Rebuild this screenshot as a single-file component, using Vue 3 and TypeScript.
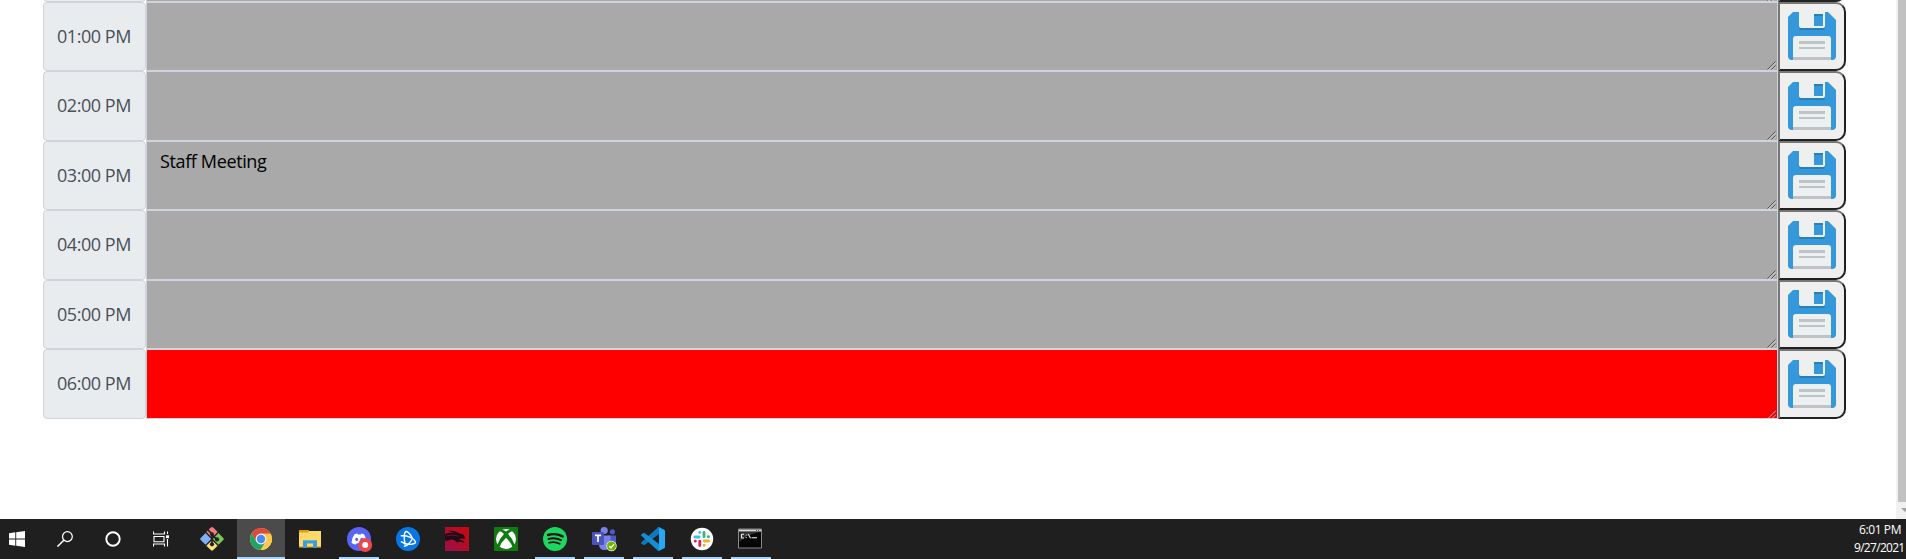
<script setup lang="ts">
interface Slot {
  label: string
  text: string
  current?: boolean
}

interface Task {
  name: string
  open?: boolean
  active?: boolean
}

const slots: Slot[] = [
  { label: '', text: '' },
  { label: '01:00 PM', text: '' },
  { label: '02:00 PM', text: '' },
  { label: '03:00 PM', text: 'Staff Meeting' },
  { label: '04:00 PM', text: '' },
  { label: '05:00 PM', text: '' },
  { label: '06:00 PM', text: '', current: true },
]

const tasks: Task[] = [
  { name: 'git' },
  { name: 'chrome', active: true, open: true },
  { name: 'explorer' },
  { name: 'discord', open: true },
  { name: 'battlenet' },
  { name: 'dragon' },
  { name: 'xbox' },
  { name: 'spotify', open: true },
  { name: 'teams', open: true },
  { name: 'vscode', open: true },
  { name: 'slack', open: true },
  { name: 'terminal', open: true },
]
</script>

<template>
  <div class="screen">
    <main class="page">
      <div class="planner">
        <div v-for="(slot, i) in slots" :key="i" class="row">
          <div class="hour">{{ slot.label }}</div>
          <div class="entry" :class="{ current: slot.current }">
            <span>{{ slot.text }}</span>
            <svg class="grip" width="9" height="9" viewBox="0 0 9 9">
              <path d="M1.5 9L9 1.5M5.5 9L9 5.5" stroke="#e4e4e4" stroke-width=".7" fill="none" />
              <path d="M.5 8.5L8.5 .5M4.5 8.5L8.5 4.5" stroke="#404040" stroke-width=".8" fill="none" />
            </svg>
          </div>
          <button class="save" type="button" aria-label="Save">
            <svg width="48" height="48" viewBox="0 0 48 48">
              <path d="M5 0H40L48 8V44Q48 48 44 48H4Q0 48 0 44V5Z" fill="#3498db" />
              <path d="M11 14H37V16Q37 18 35 18H13Q11 18 11 16Z" fill="#2980b9" />
              <path d="M11 0H37V14Q37 16 35 16H13Q11 16 11 14Z" fill="#ecf0f1" />
              <path d="M26 2H35V14H26Z" fill="#3498db" />
              <path d="M26 2H35V4H26Z" fill="#2980b9" />
              <path d="M5 48V27Q5 24 8 24H40Q43 24 43 27V48Z" fill="#ecf0f1" />
              <path d="M5 45H43V48H5ZM11 29H37V32H11ZM11 35H37V37H11Z" fill="#bdc3c7" />
            </svg>
          </button>
        </div>
      </div>
      <div class="scrollbar">
        <div class="thumb"></div>
        <svg width="10" height="17" viewBox="0 0 10 17"><path d="M5 6H13L9 10Z" fill="#a3a3a3" /></svg>
      </div>
    </main>

    <footer class="taskbar">
      <div class="system start">
        <svg width="16" height="16" viewBox="0 0 16 16" fill="#fff"><path d="M0 2.2L6.3 1.3V7.4H0ZM7.2 1.2L16 0V7.4H7.2ZM0 8.4H6.3V14.7L0 13.8ZM7.2 8.4H16V16L7.2 14.8Z" /></svg>
      </div>
      <div class="system">
        <svg width="16" height="16" viewBox="0 0 16 16" fill="none" stroke="#fff" stroke-width="1.25"><circle cx="10.4" cy="5.6" r="4.9" /><path d="M6.8 9.2L.4 15.6" stroke-width="1.5" /></svg>
      </div>
      <div class="system">
        <svg width="16" height="16" viewBox="0 0 16 16"><circle cx="8" cy="8" r="6.7" fill="none" stroke="#fff" stroke-width="1.9" /></svg>
      </div>
      <div class="system">
        <svg width="16" height="16" viewBox="0 0 16 16" fill="none" stroke="#fff" stroke-width="1.1"><path d="M.5 .5V3H11.5V.5M.5 15.5V13H11.5V15.5M1 5.5H11V10.8H1ZM14.5 .5V3M14.5 8V15.5" /><path d="M13 4.3H16V7.2H13Z" fill="#fff" stroke="none" /></svg>
      </div>

      <div class="apps">
        <div v-for="task in tasks" :key="task.name" class="app" :class="{ open: task.open, active: task.active }">
          <svg v-if="task.name === 'git'" width="24" height="24" viewBox="0 0 24 24">
            <path d="M12 0Q13 0 17.6 5.1L12 10.7L6.4 5.1Q11 0 12 0Z" fill="#f27c80" />
            <path d="M5.5 6L11.2 12L5.5 17.8L.5 12.8Q-.2 12 .5 11.2Z" fill="#7fb0f8" />
            <path d="M18.5 6L12.8 12L18.5 17.8L23.5 12.8Q24.2 12 23.5 11.2Z" fill="#7fc65a" />
            <path d="M12 13.2L17.6 18.8L13 23.3Q12 24.2 11 23.3L6.4 18.8Z" fill="#fbe27d" />
            <path d="M8 2.8L12 7V18M12 8L17 12.5" fill="none" stroke="#222" stroke-width="1.7" />
            <g fill="#222"><circle cx="12" cy="7.3" r="2" /><circle cx="12" cy="17.3" r="2.1" /><circle cx="17" cy="12.4" r="2.1" /></g>
          </svg>
          <svg v-else-if="task.name === 'chrome'" width="24" height="24" viewBox="0 0 24 24">
            <circle cx="12" cy="12" r="11" fill="#fbc94b" />
            <path d="M2.5 6.5A11 11 0 0 1 21.6 6.7H12L7.5 15Z" fill="#dc4a3d" />
            <path d="M2.5 6.5L7.4 14.7L16.6 14.7L11.6 23A11 11 0 0 1 2.5 6.5Z" fill="#1fa463" />
            <path d="M16.6 14.7L11.6 23A11 11 0 0 0 21.6 6.7H12Z" fill="#fbc94b" />
            <circle cx="12" cy="12" r="5.4" fill="#f1f3f4" /><circle cx="12" cy="12" r="4.2" fill="#4889f4" />
          </svg>
          <svg v-else-if="task.name === 'explorer'" width="24" height="24" viewBox="0 0 24 24">
            <path d="M1 3H10L11 4H23V20H1Z" fill="#ffd869" /><path d="M1 3H10.5V5.5H1Z" fill="#e2a000" />
            <path d="M1 19H23V20.5H1Z" fill="#edb831" />
            <path d="M5 21V14Q5 13 6 13H18Q19 13 19 14V21H15V16.5H9V21Z" fill="#3b9dda" />
            <path d="M5.5 13H18.5V14H5.5Z" fill="#5bb7e8" />
          </svg>
          <svg v-else-if="task.name === 'discord'" class="badged" width="26" height="26" viewBox="0 0 26 26">
            <circle cx="12" cy="12" r="12" fill="#5865f2" />
            <path d="M7.5 7.2L10 6.5L11 7.5H13.6L14.7 6.5L17 7.2Q19.6 11 19.6 15.8Q17.7 17.4 15.8 17.6L14.8 16.2H9.8L8.8 17.6Q6 17.3 4.5 15.8Q4.6 11 7.5 7.2Z" fill="#fff" />
            <ellipse cx="9.7" cy="12.4" rx="1.5" ry="1.7" fill="#5865f2" /><ellipse cx="14.8" cy="12.4" rx="1.5" ry="1.7" fill="#5865f2" />
            <circle cx="18.2" cy="18" r="7" fill="#e9494e" /><circle cx="18.2" cy="18" r="3" fill="#fff" />
          </svg>
          <svg v-else-if="task.name === 'battlenet'" width="24" height="24" viewBox="0 0 24 24">
            <circle cx="12" cy="12" r="12" fill="#0877e5" />
            <g fill="none" stroke="#fff" stroke-width="1.4" stroke-linecap="round"><path d="M5.3 8.8Q13 8 18.2 13Q21 16 17.5 16.8Q11 18.5 5.5 14.8" /><path d="M9 17Q7 6 10 4.5Q12.5 4 16.3 11" /><path d="M15.8 12.8Q12 18.5 8.5 19.2" /></g>
          </svg>
          <svg v-else-if="task.name === 'dragon'" width="24" height="24" viewBox="0 0 24 24">
            <defs><linearGradient id="ember" x1="0" y1="1" x2="1" y2="0"><stop offset="0" stop-color="#96104c" /><stop offset=".65" stop-color="#b90b20" /><stop offset="1" stop-color="#cb0711" /></linearGradient></defs>
            <path d="M0 0H24V24H0Z" fill="url(#ember)" />
            <path d="M0 7L5 5.5L9 6L3 3.5L10 4.2L14 6.3L18 7.3L20 10.3L19.6 12L16 11.5L14 12.5L18.5 13.8L19.5 16L15 14.5L12 15.5L9 13L6 12.5L2 14L0 13.2Z" fill="#240c16" />
            <path d="M1 9L8 8L13 9" stroke="#681027" fill="none" />
          </svg>
          <svg v-else-if="task.name === 'xbox'" width="24" height="24" viewBox="0 0 24 24">
            <rect width="24" height="24" rx="1" fill="#107c10" /><circle cx="12" cy="12" r="10" fill="#fff" />
            <path d="M5.5 4L7 2.8Q9.8 2.8 12 4.6Q14.2 2.8 17 2.8L18.5 4Q16.5 4.5 14 7Q18.5 11.5 20.8 18L18.7 20.5Q17 15.5 12 10.7Q7 15.5 5.3 20.5L3.2 18Q5.5 11.5 10 7Q7.5 4.5 5.5 4Z" fill="#107c10" />
          </svg>
          <svg v-else-if="task.name === 'spotify'" width="24" height="24" viewBox="0 0 24 24">
            <circle cx="12" cy="12" r="12" fill="#1ed760" />
            <g fill="none" stroke="#191414" stroke-linecap="round"><path d="M5 8Q12.5 5.8 19.6 9.4" stroke-width="2.4" /><path d="M5.5 12Q12 10.2 18 13.2" stroke-width="2" /><path d="M6 15.7Q12 14.2 16.7 16.8" stroke-width="1.6" /></g>
          </svg>
          <svg v-else-if="task.name === 'teams'" width="26" height="26" viewBox="0 0 26 26">
            <circle cx="13.2" cy="4.5" r="3.6" fill="#7b83eb" /><circle cx="21.4" cy="5.8" r="2.6" fill="#5059c9" />
            <path d="M17 9.5H25V17Q25 21 21 21H17Z" fill="#5059c9" /><path d="M8 9.5H19.5V18Q19 24 13.5 24Q8 24 8 18Z" fill="#7b83eb" />
            <rect x="1" y="6" width="12" height="13" rx="1" fill="#4b53bc" />
            <path d="M4 9.3H10M7 9.3V16" stroke="#fff" stroke-width="1.7" />
            <circle cx="20.5" cy="20" r="5.2" fill="#f4f8ea" /><circle cx="20.5" cy="20" r="4.5" fill="#6bb700" /><path d="M18.2 20L20 22L23 18.2" fill="none" stroke="#fff" stroke-width="1.3" />
          </svg>
          <svg v-else-if="task.name === 'vscode'" width="24" height="24" viewBox="0 0 24 24">
            <path d="M18 0V7L3.2 18.2L.4 16.8Q-.3 16 .4 15.2L16.8 .6Z" fill="#1079bd" />
            <path d="M18 24V17L3.2 5.8L.4 7.2Q-.3 8 .4 8.8L16.8 23.4Z" fill="#148fd3" />
            <path d="M16.7 .4Q17.5 0 18.2 .3L23.2 2.7Q24 3.1 24 4V20Q24 20.9 23.2 21.3L18.2 23.7Q17.5 24 16.7 23.4Q18 23.8 18 22.4V1.6Q18 .2 16.7 .4Z" fill="#27a8f2" />
          </svg>
          <svg v-else-if="task.name === 'slack'" width="24" height="24" viewBox="0 0 24 24">
            <circle cx="12" cy="12" r="11.2" fill="#fff" />
            <g fill="none" stroke-width="2.8" stroke-linecap="round"><path d="M4.9 10H9.2M9.7 5.4V5.6" stroke="#36c5f0" /><path d="M14 5.4V9.7M18.3 9.7H18.5" stroke="#2eb67d" /><path d="M14.3 14H18.6M14.2 18.2V18.4" stroke="#ecb22e" /><path d="M9.8 14.2V18.5M5.2 14.2H5.4" stroke="#e01e5a" /></g>
          </svg>
          <svg v-else class="console" width="24" height="24" viewBox="0 0 24 24">
            <path d="M.5 2H23.5V21H.5Z" fill="#050505" stroke="#8a8a8a" /><path d="M1 2.5H23V4.5H1Z" fill="#dedede" />
            <path d="M1.5 5H22Q9 7 1.5 15Z" fill="#333" />
            <path d="M18 3.5H19M20 3.5H21" stroke="#555" />
            <path d="M6 7.3H4.3Q3.5 7.3 3.5 8V10.2Q3.5 11 4.3 11H6M7.7 8H8.7M7.7 10.5H8.7M10.2 7L12.5 11.2M13.5 10.8H19" stroke="#eee" stroke-width="1.1" fill="none" />
          </svg>
        </div>
      </div>
      <div class="clock"><span class="time">6:01 PM</span><span class="date">9/27/2021</span></div>
    </footer>
  </div>
</template>

<style>
html,
body {
  margin: 0;
  overflow: hidden;
}
</style>

<style scoped>
* {
  box-sizing: border-box;
}
.screen {
  width: 1906px;
  height: 559px;
  overflow: hidden;
  display: flex;
  flex-direction: column;
  background: #fff;
  font-family: 'Open Sans', 'Noto Sans', sans-serif;
}
.page {
  height: 519px;
  display: flex;
  justify-content: space-between;
  overflow: hidden;
}
.planner {
  width: 1803px;
  margin: -67.75px 0 0 43px;
}
.row {
  display: flex;
  height: 69.5px;
}
.hour {
  width: 103px;
  border: 1px solid #ced4da;
  border-radius: 4px;
  background: #e9ecef;
  color: #495057;
  display: flex;
  align-items: center;
  padding: 0 0 2px 13px;
  font-size: 18px;
  letter-spacing: -0.45px;
  white-space: nowrap;
}
.entry {
  position: relative;
  width: 1632px;
  border: 1px solid #ced4da;
  background: #a9a9a9;
  color: #000;
  padding: 6px 13px;
  font-size: 18px;
  line-height: 27px;
  letter-spacing: -0.37px;
}
.entry.current {
  background: #f00;
}
.grip {
  position: absolute;
  right: 1px;
  bottom: 0;
}
.save {
  width: 68px;
  height: 100%;
  margin: 0;
  padding: 0 0 1px 8px;
  display: flex;
  align-items: center;
  border: 2px solid;
  border-color: #767676 #212121 #212121 #767676;
  border-radius: 0 10px 10px 0;
  background: #efefef;
}
.scrollbar {
  width: 10px;
  background: #f1f1f1;
}
.thumb {
  width: 8px;
  height: 502px;
  margin-left: 2px;
  background: #c1c1c1;
}
.scrollbar svg {
  display: block;
}
.taskbar {
  height: 40px;
  display: flex;
  background: #1f1f1f;
}
.system {
  width: 48px;
  display: flex;
  align-items: center;
  justify-content: center;
}
.start {
  width: 41px;
  padding-right: 7px;
}
.apps {
  display: flex;
  gap: 1px;
  margin-left: 3px;
}
.app {
  position: relative;
  width: 48px;
  display: flex;
  align-items: center;
  justify-content: center;
}
.app.active {
  background: #4b4b4b;
}
.app.open::after {
  content: '';
  position: absolute;
  bottom: 0;
  left: 4px;
  width: 40px;
  height: 2px;
  background: #a6d2fb;
}
.app.active::after {
  left: 0;
  width: 48px;
}
.badged {
  margin: 2px 0 0 1px;
}
.console {
  margin-right: 2px;
}
.clock {
  width: 60px;
  margin-left: auto;
  display: flex;
  flex-direction: column;
  color: #fff;
  font-size: 12px;
  line-height: 18px;
  letter-spacing: -0.4px;
  white-space: nowrap;
  padding-top: 2px;
}
.time {
  padding-left: 13px;
}
.date {
  padding-left: 8px;
  letter-spacing: -0.7px;
}
</style>
